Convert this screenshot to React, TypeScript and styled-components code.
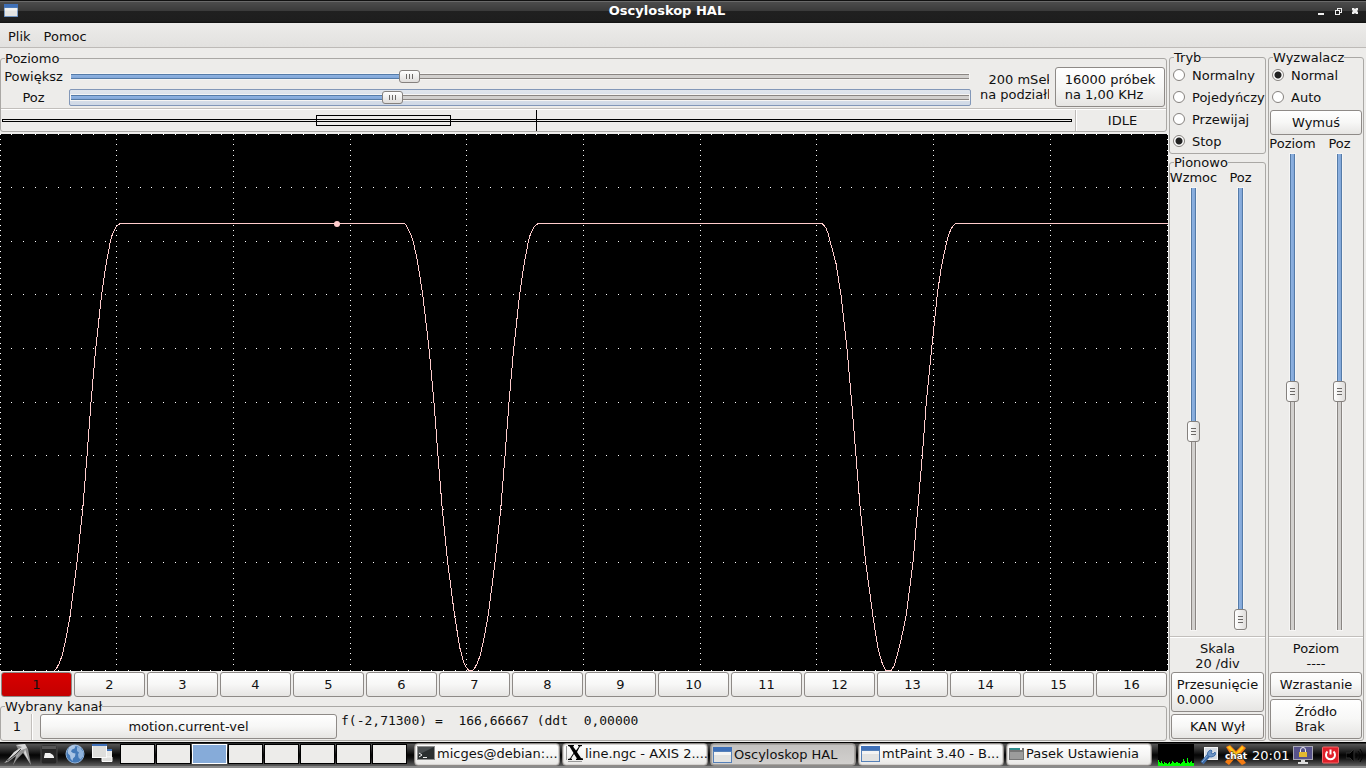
import React, { useState } from "react";
import styled, { createGlobalStyle, css } from "styled-components";

const GlobalStyle = createGlobalStyle`
  * { box-sizing: border-box; }
  html, body { margin: 0; padding: 0; }
  body {
    background: #edecea;
    color: #111;
    font: 13px/15px "DejaVu Sans", sans-serif;
  }
  button, input, output { font: inherit; color: inherit; }
`;

const Screen = styled.div`
  display: flex;
  flex-direction: column;
  min-height: 100vh;
`;

/* ---- Window chrome ---- */

const TitleBar = styled.header`
  display: flex;
  align-items: center;
  height: 23px;
  padding: 0 6px 2px 4px;
  background: linear-gradient(#111 0 1px, #6a6a6a 1px 2px, #4c4c4c 2px, #3a3a3a 11px, #202020 11px, #1e1e1e 21px, #111);
`;

const WindowTitle = styled.h1`
  flex: 1;
  margin: 0;
  text-align: center;
  font-size: 13px;
  line-height: 15px;
  font-weight: bold;
  color: #fff;
`;

const WindowButtons = styled.div`
  display: flex;
  gap: 7px;
`;

const WindowButton = styled.button`
  display: flex;
  width: 10px;
  height: 12px;
  padding: 0;
  border: 0;
  background: none;
`;

const MenuBar = styled.nav`
  display: flex;
  align-items: center;
  gap: 13px;
  height: 25px;
  padding: 2px 8px 0;
  border-bottom: 1px solid #bdbab7;
  background: linear-gradient(#edecea, #e2e1df);
`;

const MenuItem = styled.button`
  padding: 0;
  border: 0;
  background: none;
`;

/* ---- Shared parts ---- */

const Frame = styled.fieldset<{ $grow?: boolean }>`
  display: flex;
  flex-direction: column;
  min-width: 0;
  margin: 0;
  padding: 0;
  border: 1px solid #aaa8a5;
  border-radius: 3px;
  ${(p) => p.$grow && css`flex: 1;`}
`;

const FrameTitle = styled.legend`
  margin-left: 4px;
  padding: 0;
  white-space: nowrap;
`;

const Button = styled.button<{ $tall?: boolean; $lit?: boolean }>`
  display: flex;
  align-items: center;
  justify-content: center;
  height: ${(p) => (p.$tall ? 40 : 25)}px;
  padding: 0;
  border: 1px solid #8e8a87;
  border-radius: 3px;
  background: ${(p) => (p.$lit ? "linear-gradient(#d80000, #c40000)" : "linear-gradient(#fff, #f7f7f6 50%, #e6e5e3)")};
  text-align: left;
  white-space: pre;
`;

const Divider = styled.hr`
  width: 100%;
  height: 2px;
  margin: 0;
  border: 0;
  background: linear-gradient(#c2bfbc 50%, #fff 50%);
`;

const thumb = css<{ $vertical?: boolean }>`
  appearance: none;
  inline-size: 21px;
  block-size: 13px;
  margin-block-start: -4px;
  border: 1px solid #85817e;
  border-radius: 3px;
  background:
    ${(p) =>
      p.$vertical
        ? "repeating-linear-gradient(#6b6866 0 1px, transparent 1px 3px) center / 5px 7px no-repeat, linear-gradient(to right, #fff, #dfdddb)"
        : "repeating-linear-gradient(to right, #6b6866 0 1px, transparent 1px 3px) center / 7px 5px no-repeat, linear-gradient(#fff, #dfdddb)"};
`;

const Range = styled.input.attrs({ type: "range", min: 0, max: 1000 })<{ $fill: number; $vertical?: boolean }>`
  appearance: none;
  block-size: 13px;
  min-inline-size: 0;
  margin: 0;
  background: none;
  outline: none;
  ${(p) => (p.$vertical ? css`writing-mode: vertical-lr; flex: 1;` : css`width: 100%;`)}

  &::-webkit-slider-runnable-track {
    block-size: 5px;
    background:
      linear-gradient(${(p) => (p.$vertical ? "to right" : "to bottom")}, #557ba8 0 1px, #8fb3e2 1px, #82a7d8 4px, #557ba8 4px)
        0 0 / ${(p) => (p.$vertical ? `100% ${p.$fill}%` : `${p.$fill}% 100%`)} no-repeat,
      linear-gradient(${(p) => (p.$vertical ? "to right" : "to bottom")}, #8a8683 0 1px, #d2d0ce 1px 4px, #8a8683 4px);
    box-shadow: 0 0 0 1px #f6f5f4;
  }

  &::-webkit-slider-thumb {
    ${thumb}
  }
`;

function Slider({ initial, vertical, label }: { initial: number; vertical?: boolean; label: string }) {
  const [value, setValue] = useState(initial);
  return (
    <Range
      aria-label={label}
      value={value}
      $fill={value / 10}
      $vertical={vertical}
      onChange={(e: React.ChangeEvent<HTMLInputElement>) => setValue(Number(e.target.value))}
    />
  );
}

/* ---- Main area ---- */

const Workspace = styled.main`
  flex: 1;
  display: grid;
  grid-template-columns: minmax(0, 1fr) 98px 97px;
  gap: 1px;
  padding: 2px 1px 1px 0;
`;

const ScopeColumn = styled.section`
  display: flex;
  flex-direction: column;
  padding-top: 1px;
`;

const SideColumn = styled.section`
  display: flex;
  flex-direction: column;
  gap: 1px;
  padding-right: 1px;
`;

const HorizontalFrame = styled(Frame)`
  margin-right: 1px;
`;

const HorizontalGrid = styled.div`
  display: grid;
  grid-template-columns: 68px minmax(0, 1fr) 83px 112px;
  align-items: center;
  height: 42px;
`;

const SliderLabels = styled.div`
  display: grid;
  gap: 6px;
  padding-right: 3px;
  text-align: center;
`;

const SliderRows = styled.div`
  display: grid;
  gap: 4px;
  padding: 1px 0;
`;

const SliderBox = styled.div<{ $focused?: boolean }>`
  display: flex;
  align-items: center;
  height: 17px;
  padding: 0 1px;
  border: 1px solid ${(p) => (p.$focused ? "#8297b8" : "transparent")};
  border-radius: 2px;
  background: ${(p) => (p.$focused ? "linear-gradient(#e0e5ec, #d0d9e6)" : "none")};
`;

const Readout = styled.output`
  display: flex;
  width: 69px;
  margin-left: 9px;
  overflow: hidden;
  text-align: center;
  white-space: pre;
`;

const SampleButton = styled(Button)`
  margin: 0 1px;
`;

const StatusRow = styled.div`
  display: grid;
  grid-template-columns: minmax(0, 1fr) 91px;
  height: 21px;
`;

const Minimap = styled.svg`
  width: 100%;
  height: 21px;
`;

const Status = styled.div`
  display: flex;
  align-items: center;
  justify-content: center;
  padding-left: 3px;
  border-left: 1px solid #bdbab7;
  box-shadow: inset 1px 0 #fff;
`;

const Display = styled.div`
  flex: 1;
  display: flex;
  min-height: 200px;
  margin: 2px 0 1px;
  background: #000;
`;

const Plot = styled.svg`
  display: block;
  width: 100%;
  height: 100%;
`;

const ChannelRow = styled.div`
  display: grid;
  grid-template-columns: repeat(16, minmax(0, 1fr));
  gap: 2px;
  margin: 0 1px 2px;
`;

const ChannelFrame = styled(Frame)`
  margin-right: 1px;
`;

const ChannelInfo = styled.div`
  display: flex;
  height: 26px;
`;

const ChannelNumber = styled.div`
  display: flex;
  align-items: center;
  justify-content: center;
  width: 31px;
  padding: 0 0 2px 2px;
  border-right: 1px solid #c2bfbc;
  box-shadow: 1px 0 #fff;
`;

const SignalButton = styled(Button)`
  width: 297px;
  margin: 0 4px 0 8px;
`;

const Formula = styled.output`
  width: 300px;
  overflow: hidden;
  font-family: "DejaVu Sans Mono", monospace;
  font-size: 13px;
  line-height: 13px;
  white-space: pre;
`;

const Option = styled.label`
  display: flex;
  align-items: center;
  gap: 7px;
  height: 22px;
  padding: 0 0 2px 3px;
  white-space: nowrap;
`;

const Radio = styled.input.attrs({ type: "radio" })`
  appearance: none;
  flex: none;
  width: 12px;
  height: 12px;
  margin: 0;
  border: 1px solid #85817e;
  border-radius: 50%;
  background: #fff;

  &:checked {
    background: radial-gradient(circle, #222 0 3px, #fff 4px);
  }
`;

const SliderPair = styled.div`
  flex: 1;
  display: grid;
  grid-template-columns: 47px 47px;
  padding-bottom: 6px;
`;

const SliderColumn = styled.div`
  display: flex;
  flex-direction: column;
  align-items: center;
  gap: 3px;
  white-space: nowrap;
`;

const Value = styled.output`
  padding: 3px 0 1px;
  text-align: center;
  white-space: pre;
`;

const ButtonStack = styled.div`
  display: grid;
  gap: 2px;
  padding: 0 1px 1px;
`;

const ForceButton = styled(Button)`
  margin: 1px;
`;

/* ---- Taskbar ---- */

const Taskbar = styled.footer`
  display: flex;
  height: 26px;
  padding: 1px 2px 1px 4px;
  background: linear-gradient(#000 0 1px, #555 2px, #333 7px, #050505 13px, #111 16px, #5d5d5d 24px, #8a8a8a 24px);
`;

const Launchers = styled.div`
  display: flex;
  gap: 7px;
  width: 116px;
`;

const IconButton = styled.button`
  display: flex;
  align-items: center;
  padding: 0;
  border: 0;
  background: none;
`;

const Pager = styled.div`
  display: grid;
  grid-template-columns: repeat(8, 35px);
  gap: 1px;
  height: 20px;
  margin-top: 1px;
`;

const Desk = styled.button<{ $active?: boolean }>`
  padding: 0;
  border: 1px solid ${(p) => (p.$active ? "#fff" : "#000")};
  background: ${(p) => (p.$active ? "#86abd9" : "#edecea")};
`;

const Tasks = styled.div`
  flex: 1;
  display: grid;
  grid-template-columns: repeat(5, minmax(0, 1fr));
  gap: 2px;
  margin: 0 6px 0 7px;
`;

const Task = styled.button<{ $active?: boolean }>`
  display: flex;
  align-items: center;
  gap: 2px;
  height: 23px;
  padding: 0 2px ${(p) => (p.$active ? 0 : 2)}px;
  overflow: hidden;
  border: 1px solid #8e8a87;
  border-radius: 4px;
  box-shadow: inset 0 0 0 1px ${(p) => (p.$active ? "#a5a3a0" : "#d5d3d1")};
  background: ${(p) => (p.$active ? "linear-gradient(#c4c2c0, #d2d0ce)" : "linear-gradient(#fff, #f6f6f5 50%, #e8e7e5)")};
  white-space: nowrap;

  svg { flex: none; }
`;

const Tray = styled.div`
  display: grid;
  grid-template-columns: 38px 20px 24px 37px 25px 20px 18px;
  column-gap: 4px;
  align-items: center;
  width: 206px;
`;

const Clock = styled.time`
  color: #fff;
  white-space: nowrap;
`;

/* ---- Scope drawing ---- */

const PLOT_W = 1168;
const PLOT_H = 537;

function buildGrid(): string {
  let d = "";
  const dot = (x: number, y: number) => {
    d += `M${x} ${y}h1v1h-1z`;
  };
  for (let line = 0; line <= 10; line++) {
    for (let step = 0; step <= 100; step++) {
      dot(Math.floor((line * 1167) / 10), Math.floor((step * 536) / 100));
      dot(Math.floor((step * 1167) / 100), Math.floor((line * 536) / 10));
    }
  }
  return d;
}

/* Velocity samples around one stop, in thirds of a pixel: [x, y]. */
const FALL_1 = [[14, 25], [20, 33], [25, 43], [33, 60], [40, 80], [52, 135], [68, 237], [87, 400], [102, 562], [114, 722], [127, 883], [143, 1042], [164, 1204], [180, 1300], [190, 1338], [198, 1355], [205, 1364], [212, 1367]];
const RISE_1 = [[216, 1367], [222, 1362], [231, 1346], [240, 1322], [250, 1280], [264, 1204], [285, 1042], [302, 883], [315, 722], [327, 562], [341, 400], [359, 237], [370, 160], [385, 80], [391, 58], [398, 42], [406, 31], [415, 25]];
const FALL_2 = [[22, 25], [32, 37], [39, 54], [46, 80], [63, 145], [78, 240], [96, 400], [110, 562], [123, 722], [136, 883], [152, 1042], [174, 1204], [188, 1295], [200, 1340], [208, 1358], [214, 1367]];
const RISE_2 = [[228, 1367], [238, 1350], [248, 1315], [260, 1265], [273, 1204], [294, 1042], [308, 883], [322, 722], [334, 562], [350, 400], [367, 237], [379, 155], [395, 80], [402, 56], [408, 42], [415, 31], [422, 25]];

function segment(points: number[][], left: number): string {
  return points.map(([x, y]) => `L${(left + x / 3).toFixed(1)} ${(81 + y / 3 + 0.2).toFixed(1)}`).join("");
}

const TRACE =
  "M54 537" +
  segment(RISE_1, -18) +
  segment(FALL_1, 400) +
  segment(RISE_1, 400) +
  segment(FALL_2, 815) +
  segment(RISE_2, 815) +
  "L1168 89.5";

function ScopePlot() {
  return (
    <Plot viewBox={`0 0 ${PLOT_W} ${PLOT_H}`} preserveAspectRatio="none" role="img" aria-label="motion.current-vel">
      <path d={buildGrid()} fill="#fff" shapeRendering="crispEdges" />
      <path d={TRACE} fill="none" stroke="#ffcccc" strokeWidth="1" shapeRendering="crispEdges" />
      <circle cx="337" cy="90" r="3" fill="#ffcccc" />
    </Plot>
  );
}

function RecordMap() {
  return (
    <Minimap viewBox="0 0 1074 21" preserveAspectRatio="none" aria-hidden="true">
      <g fill="none" stroke="#000" shapeRendering="crispEdges">
        <rect x="1.5" y="9.5" width="1069" height="2" />
        <rect x="315.5" y="5.5" width="134" height="10" />
        <path d="M535.5 0v21" />
      </g>
    </Minimap>
  );
}

/* ---- Icons ---- */

const WindowIcon = ({ w = 19, h = 16 }: { w?: number; h?: number }) => (
  <svg width={w} height={h} viewBox="0 0 19 16" preserveAspectRatio="none" aria-hidden="true">
    <rect width="19" height="16" fill="#5580b8" />
    <rect width="19" height="4" fill="#3f70b8" />
    <rect x="1" y="5" width="17" height="10" fill="#e3e3e1" />
    <path d="M1 5h17v3H1z" fill="#f4f4f3" />
  </svg>
);

const BirdIcon = () => (
  <svg width="29" height="24" viewBox="0 0 29 24" aria-hidden="true">
    <path d="M12 2L21 1 24 6 27 22 19 10 13 16 9 22 12 13 4 19 0 20 7 13 14 6z" fill="#8f8f8f" />
    <path d="M12 2L21 1 23 5 15 8 8 14 1 20 10 9 18 4zM21 6L25 18 27 22 20 10zM16 9L11 17 9 22 13 13z" fill="#d8d8d8" />
    <path d="M17 6L11 12 3 18" stroke="#444" fill="none" />
  </svg>
);

const DriveIcon = () => (
  <svg width="18" height="24" viewBox="0 0 18 24" aria-hidden="true">
    <rect x="1" y="2" width="16" height="19" rx="2" fill="#262626" stroke="#4a4a4a" />
    <path d="M2 3h14v3H2z" fill="#555" />
    <path d="M4 14l1-4h5l3 2 1 2v1H4z" fill="#f2f2f2" />
  </svg>
);

const GlobeIcon = () => (
  <svg width="20" height="24" viewBox="0 0 20 24" aria-hidden="true">
    <circle cx="10" cy="11" r="9" fill="#4379b8" stroke="#8fb0d6" />
    <path d="M2.500 8c1-3 3-5 6-5.500l2 1-1 2-2.500 1-1 2 2 1.500 2.500.5-.5 3-2 2-.5 2.500-2-2.500-.5-3-2-2z" fill="#a9c4e4" />
    <path d="M12 4l3 .5 3 4v5l-2.500 3-2-2-.5-3 1-2-2-1.500z" fill="#8fb3dc" />
    <path d="M4 5q6-5 12 0" stroke="#cfe0f2" fill="none" opacity=".6" />
  </svg>
);

const WindowsIcon = () => (
  <svg width="21" height="24" viewBox="0 0 21 24" aria-hidden="true">
    <path d="M6 6h14v12H10v-2h4V6z" fill="#e8e8e6" />
    <path d="M10 14h10v4.500H10z" fill="#dededc" stroke="#fafafa" />
    <path d="M14 6h6v2h-6z" fill="#3f70b8" />
    <rect x=".5" y="2.5" width="14" height="12" fill="#dededc" stroke="#fafafa" />
    <path d="M0 1h15v2H0z" fill="#3f70b8" />
  </svg>
);

const TerminalIcon = () => (
  <svg width="18" height="15" viewBox="0 0 18 15" aria-hidden="true">
    <rect x=".5" y=".5" width="17" height="13" fill="#2b2f30" stroke="#8d8d8d" />
    <path d="M1 1h16L1 9z" fill="#4a4e50" />
    <path d="M2 7l3 2-3 2M6 11.500h4" stroke="#eee" fill="none" />
  </svg>
);

const XIcon = () => (
  <svg width="18" height="19" viewBox="0 0 18 19" aria-hidden="true">
    <path d="M1.500 2v14M3 17.500h14" stroke="#999" />
    <path d="M3 1h6v1L8 2.500l3 4 3-4-1-.5V1h4v1l-2 .5L12 8l4 6 2 .5V16h-7v-1l1-.5L9 10l-3 4.500 1 .5v1H3v-1l2-.5L8.500 9 4.500 2.500 3 2z" fill="#000" />
  </svg>
);

const FolderIcon = () => (
  <svg width="15" height="14" viewBox="0 0 15 14" aria-hidden="true">
    <path d="M0 1h15v12H0z" fill="#777" />
    <path d="M1 1h10v2H1z" fill="#2f8c8c" />
    <path d="M11 1h2v2h-2z" fill="#fff" />
    <path d="M1 5h13v7H1z" fill="#9c9c9c" />
  </svg>
);

const LOAD = [6, 4, 3, 5, 3, 2, 4, 3, 3, 2, 3, 4, 2, 3, 5, 4, 3, 3, 4, 4, 3, 3, 2, 3, 4, 7, 5, 3, 3, 8, 4, 3, 4, 5, 3, 3];

const LoadGraph = () => (
  <svg width="36" height="22" viewBox="0 0 36 22" aria-hidden="true">
    <rect width="36" height="22" fill="#000" />
    <path d={LOAD.map((v, i) => `M${i} 22v${-v}h1v${v}z`).join("")} fill="#0f0" shapeRendering="crispEdges" />
  </svg>
);

const MouseIcon = () => (
  <svg width="20" height="20" viewBox="0 0 20 20" aria-hidden="true">
    <rect x="4.500" y="2.500" width="13" height="12" fill="#d5dbe3" stroke="#f5f5f5" />
    <path d="M2 18L9 10" stroke="#3d6ca8" strokeWidth="4" />
    <path d="M2 17L9 9" stroke="#8db2de" strokeWidth="1" />
    <path d="M8 11a4 4 0 0 1 3-6l1 1-1 2 2 1 2-2q2 4-4 5z" fill="#6d94c4" stroke="#3d6ca8" />
  </svg>
);

const ChatIcon = () => (
  <svg width="24" height="22" viewBox="0 0 24 22" aria-hidden="true">
    <path d="M2 3l4-2 6 6 6-6 4 3-6 7 6 8-4 2-7-7-6 7-4-3 6-7z" fill="#f47b12" />
    <path d="M3 3l3-1 6 7 6-7 2 2-8 8z" fill="#ffc61a" />
    <text x="12" y="15" textAnchor="middle" fontFamily="DejaVu Sans" fontSize="9" fontWeight="bold" fill="#fff" stroke="#222" strokeWidth="1" paintOrder="stroke">chat</text>
  </svg>
);

const LockIcon = () => (
  <svg width="20" height="20" viewBox="0 0 20 20" aria-hidden="true">
    <rect x=".5" y="1.500" width="19" height="13" fill="#57528a" stroke="#aaa8b5" />
    <path d="M7.500 7V5a2.500 2.500 0 0 1 5 0v2" fill="none" stroke="#eee" />
    <rect x="6" y="7" width="8" height="5" fill="#e2b930" />
    <path d="M8 15h4v2h3v2H5v-2h3z" fill="#ddd" />
  </svg>
);

const PowerIcon = () => (
  <svg width="17" height="18" viewBox="0 0 17 18" aria-hidden="true">
    <rect x=".5" y="1" width="16" height="16" rx="1" fill="#e0202a" stroke="#f26a6a" />
    <path d="M5.500 5.500a4.500 4.500 0 1 0 6 0M8.500 3.500v5" fill="none" stroke="#fff" strokeWidth="2" />
  </svg>
);

const SpeakerIcon = () => (
  <svg width="18" height="18" viewBox="0 0 18 18" aria-hidden="true">
    <path d="M0 7h4l4-4v13l-4-4H0z" fill="#000" stroke="#333" />
    <path d="M10 7q2 2 0 5M12 5q4 4 0 9M14 3q5 6 0 13" fill="none" stroke="#050505" strokeWidth="1" />
  </svg>
);

/* ---- Data ---- */

const CHANNELS = Array.from({ length: 16 }, (_, i) => i + 1);
const MODES = ["Normalny", "Pojedyńczy", "Przewijaj", "Stop"];
const TRIGGERS = ["Normal", "Auto"];
const TASKS = [
  { text: "micges@debian:...", icon: <TerminalIcon /> },
  { text: "line.ngc - AXIS 2....", icon: <XIcon /> },
  { text: "Oscyloskop HAL", icon: <WindowIcon />, active: true },
  { text: "mtPaint 3.40 - B...", icon: <WindowIcon /> },
  { text: "Pasek Ustawienia", icon: <FolderIcon /> },
];

function RadioGroup({ name, options, initial }: { name: string; options: string[]; initial: string }) {
  return (
    <div>
      {options.map((o) => (
        <Option key={o}>
          <Radio name={name} defaultChecked={o === initial} />
          {o}
        </Option>
      ))}
    </div>
  );
}

function Pair({ labels, values }: { labels: string[]; values: number[] }) {
  return (
    <SliderPair>
      {labels.map((l, i) => (
        <SliderColumn key={l}>
          <span>{l}</span>
          <Slider vertical initial={values[i]} label={l} />
        </SliderColumn>
      ))}
    </SliderPair>
  );
}

export default function App() {
  return (
    <Screen>
      <GlobalStyle />
      <TitleBar>
        <WindowIcon w={14} h={13} />
        <WindowTitle>Oscyloskop HAL</WindowTitle>
        <WindowButtons>
          <WindowButton aria-label="Minimalizuj">
            <svg width="10" height="12"><path d="M2 8h6v2H2z" fill="#eee" /></svg>
          </WindowButton>
          <WindowButton aria-label="Przywróć">
            <svg width="10" height="12" shapeRendering="crispEdges"><path d="M4.500 5.500v-2h4v4h-2M2.500 5.500h4v4h-4z" fill="none" stroke="#eee" /></svg>
          </WindowButton>
          <WindowButton aria-label="Zamknij">
            <svg width="10" height="12"><path d="M2 3h2l1 1 1-1h2v2L7 6l1 1v2H6l-1-1-1 1H2V7l1-1-1-1z" fill="#eee" /></svg>
          </WindowButton>
        </WindowButtons>
      </TitleBar>
      <MenuBar>
        <MenuItem>Plik</MenuItem>
        <MenuItem>Pomoc</MenuItem>
      </MenuBar>

      <Workspace>
        <ScopeColumn>
          <HorizontalFrame>
            <FrameTitle>Poziomo</FrameTitle>
            <HorizontalGrid>
              <SliderLabels>
                <span>Powiększ</span>
                <span>Poz</span>
              </SliderLabels>
              <SliderRows>
                <SliderBox>
                  <Slider initial={374} label="Powiększ" />
                </SliderBox>
                <SliderBox $focused>
                  <Slider initial={355} label="Poz" />
                </SliderBox>
              </SliderRows>
              <Readout>{"200 mSek\nna podziałkę"}</Readout>
              <SampleButton $tall>{"16000 próbek\nna 1,00 KHz"}</SampleButton>
            </HorizontalGrid>
            <Divider />
            <StatusRow>
              <RecordMap />
              <Status>IDLE</Status>
            </StatusRow>
          </HorizontalFrame>
          <Display>
            <ScopePlot />
          </Display>
          <ChannelRow>
            {CHANNELS.map((n) => (
              <Button key={n} $lit={n === 1}>{n}</Button>
            ))}
          </ChannelRow>
          <ChannelFrame>
            <FrameTitle>Wybrany kanał</FrameTitle>
            <ChannelInfo>
              <ChannelNumber>1</ChannelNumber>
              <SignalButton>motion.current-vel</SignalButton>
              <Formula>{"f(-2,71300) =  166,66667 (ddt  0,00000"}</Formula>
            </ChannelInfo>
          </ChannelFrame>
        </ScopeColumn>

        <SideColumn>
          <Frame>
            <FrameTitle>Tryb</FrameTitle>
            <RadioGroup name="mode" options={MODES} initial="Stop" />
          </Frame>
          <Frame $grow>
            <FrameTitle>Pionowo</FrameTitle>
            <Pair labels={["Wzmoc", "Poz"]} values={[553, 1000]} />
            <Divider />
            <Value>{"Skala\n20 /div"}</Value>
            <ButtonStack>
              <Button $tall>{"Przesunięcie\n0.000"}</Button>
              <Button>KAN Wył</Button>
            </ButtonStack>
          </Frame>
        </SideColumn>

        <SideColumn>
          <Frame $grow>
            <FrameTitle>Wyzwalacz</FrameTitle>
            <RadioGroup name="trigger" options={TRIGGERS} initial="Normal" />
            <ForceButton>Wymuś</ForceButton>
            <Pair labels={["Poziom", "Poz"]} values={[499, 499]} />
            <Divider />
            <Value>{"Poziom\n----"}</Value>
            <ButtonStack>
              <Button>Wzrastanie</Button>
              <Button $tall>{"Źródło\nBrak"}</Button>
            </ButtonStack>
          </Frame>
        </SideColumn>
      </Workspace>

      <Taskbar>
        <Launchers>
          <IconButton aria-label="Menu"><BirdIcon /></IconButton>
          <IconButton aria-label="Pliki"><DriveIcon /></IconButton>
          <IconButton aria-label="Przeglądarka"><GlobeIcon /></IconButton>
          <IconButton aria-label="Pulpit"><WindowsIcon /></IconButton>
        </Launchers>
        <Pager>
          {CHANNELS.slice(0, 8).map((n) => (
            <Desk key={n} $active={n === 3} aria-label={`Pulpit ${n}`} />
          ))}
        </Pager>
        <Tasks>
          {TASKS.map((t) => (
            <Task key={t.text} $active={t.active}>
              {t.icon}
              {t.text}
            </Task>
          ))}
        </Tasks>
        <Tray>
          <LoadGraph />
          <MouseIcon />
          <ChatIcon />
          <Clock>20:01</Clock>
          <LockIcon />
          <PowerIcon />
          <SpeakerIcon />
        </Tray>
      </Taskbar>
    </Screen>
  );
}
